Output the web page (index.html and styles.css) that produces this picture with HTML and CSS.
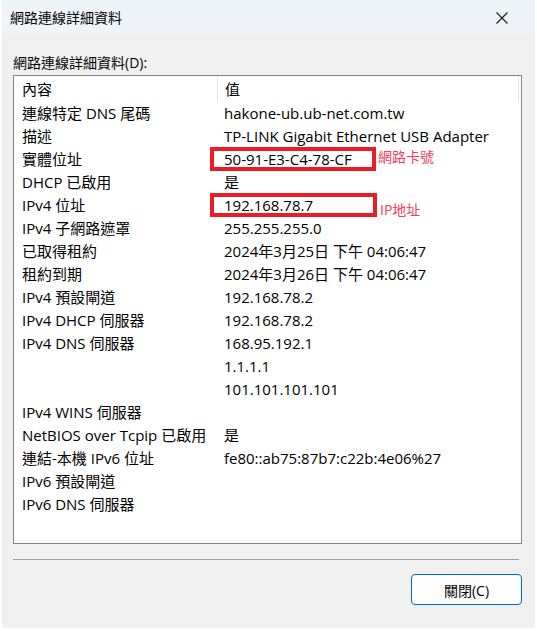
FILE: index.html
```html
<!DOCTYPE html>
<html lang="zh-Hant">
<head>
    <meta charset="UTF-8">
    <meta name="viewport" content="width=device-width, initial-scale=1.0">
    <title>網路連線詳細資料</title>
    <link rel="stylesheet" href="styles.css">
</head>
<body>
    <div class="window">
        <div class="titlebar">
            <span class="title">網路連線詳細資料</span>
            <svg class="close" width="12" height="12" viewBox="0 0 12 12"><path d="M0.5 0.5 L11.5 11.5 M11.5 0.5 L0.5 11.5" stroke="#1a1a1a" stroke-width="1.1" fill="none"/></svg>
        </div>
        <div class="content">
            <div class="label">網路連線詳細資料(D):</div>
            <div class="listbox">
                <div class="header">
                    <div class="hcell first">內容</div>
                    <div class="hcell">值</div>
                </div>
                <div class="rows">
                    <div class="cell">連線特定 DNS 尾碼</div><div class="cell v">hakone-ub.ub-net.com.tw</div>
                    <div class="cell">描述</div><div class="cell v">TP-LINK Gigabit Ethernet USB Adapter</div>
                    <div class="cell">實體位址</div><div class="cell v">50-91-E3-C4-78-CF</div>
                    <div class="cell">DHCP 已啟用</div><div class="cell v">是</div>
                    <div class="cell">IPv4 位址</div><div class="cell v">192.168.78.7</div>
                    <div class="cell">IPv4 子網路遮罩</div><div class="cell v">255.255.255.0</div>
                    <div class="cell">已取得租約</div><div class="cell v">2024年3月25日 下午 04:06:47</div>
                    <div class="cell">租約到期</div><div class="cell v">2024年3月26日 下午 04:06:47</div>
                    <div class="cell">IPv4 預設閘道</div><div class="cell v">192.168.78.2</div>
                    <div class="cell">IPv4 DHCP 伺服器</div><div class="cell v">192.168.78.2</div>
                    <div class="cell">IPv4 DNS 伺服器</div><div class="cell v">168.95.192.1</div>
                    <div class="cell"></div><div class="cell v">1.1.1.1</div>
                    <div class="cell"></div><div class="cell v">101.101.101.101</div>
                    <div class="cell">IPv4 WINS 伺服器</div><div class="cell v"></div>
                    <div class="cell">NetBIOS over Tcpip 已啟用</div><div class="cell v">是</div>
                    <div class="cell">連結-本機 IPv6 位址</div><div class="cell v">fe80::ab75:87b7:c22b:4e06%27</div>
                    <div class="cell">IPv6 預設閘道</div><div class="cell v"></div>
                    <div class="cell">IPv6 DNS 伺服器</div><div class="cell v"></div>
                </div>
                <div class="mark mark-mac"></div>
                <div class="mark mark-ip"></div>
                <span class="note note-mac">網路卡號</span>
                <span class="note note-ip">IP地址</span>
            </div>
            <div class="divider"></div>
            <div class="actions">
                <button class="btn">關閉(C)</button>
            </div>
        </div>
    </div>
</body>
</html>
```

FILE: styles.css
```css
body { margin: 0; background: #ffffff; font-family: "Open Sans", "Noto Sans CJK TC", sans-serif; color: #000; }
.window { margin-left: 2px; width: 533px; height: 628px; background: #f0f0f0; }
.titlebar { height: 34px; background: #eff4f9; display: flex; align-items: center; justify-content: space-between; padding: 0 27px 0 8px; box-sizing: border-box; }
.title { font-size: 14px; }
.close { margin-top: 2px; }
.content { padding: 20px 13px 0 11px; }
.label { font-size: 14px; height: 21px; line-height: 18px; }
.listbox { position: relative; height: 467px; border: 1px solid #838383; background: #fff; }
.header { display: flex; height: 26px; margin-right: 2px; border-right: 1px solid #e5e5e5; }
.hcell { font-size: 15px; line-height: 27px; padding-left: 7px; }
.hcell.first { width: 195px; padding-left: 8px; border-right: 1px solid #e5e5e5; }
.rows { display: grid; grid-template-columns: 203px 1fr; grid-auto-rows: 23px; }
.cell { font-size: 15px; line-height: 23px; padding-left: 8px; white-space: nowrap; }
.cell.v { padding-left: 7px; }
.mark { position: absolute; left: 196px; width: 158px; height: 16px; border: 4px solid #ed1c24; }
.mark-mac { top: 71px; }
.mark-ip { top: 117px; width: 159px; }
.note { position: absolute; font-size: 14px; color: #f0405a; line-height: 18px; }
.note-mac { left: 364px; top: 72px; }
.note-ip { left: 366px; top: 125px; }
.divider { height: 1px; background: #a0a0a0; margin: 15px 3px 0 0; }
.actions { display: flex; justify-content: flex-end; padding-top: 14px; }
.btn { width: 111px; height: 31px; background: #fdfdfd; border: 1px solid #0067c0; border-radius: 4px; font-family: inherit; font-size: 14px; color: #000; }
```
